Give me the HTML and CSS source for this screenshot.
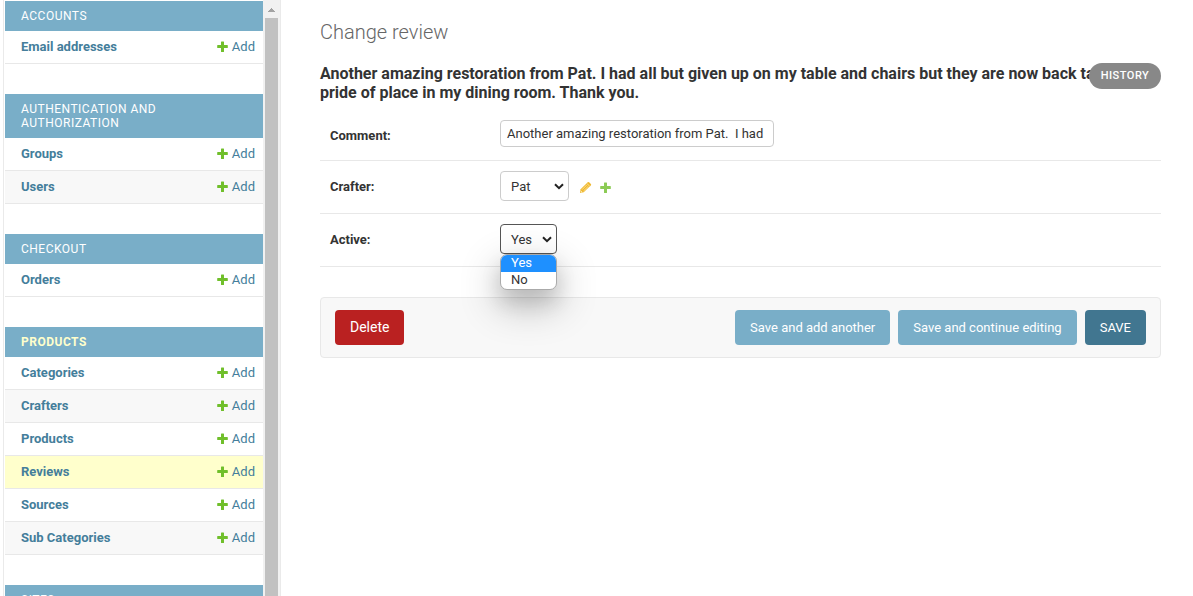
FILE: index.html
```html
<!DOCTYPE html>
<html lang="en">
<head>
<meta charset="utf-8">
<title>Change review</title>
<link rel="stylesheet" href="styles.css">
</head>
<body>
<svg class="defs" width="0" height="0" aria-hidden="true">
  <symbol id="plus" viewBox="0 0 11 11"><path d="M4.500 .5h2a.5.5 0 0 1 .5.500V4h3.300a.5.5 0 0 1 .5.500v2a.5.5 0 0 1-.5.500H7v3.500a.5.5 0 0 1-.5.500h-2a.5.5 0 0 1-.5-.5V7H.700a.5.5 0 0 1-.5-.5v-2A.5.5 0 0 1 .700 4H4V1a.5.5 0 0 1 .5-.5z"/></symbol>
</svg>
<div class="page">
  <nav class="sidebar">
    <div class="apps">
      <section class="app">
        <h3 class="caption">Accounts</h3>
        <div class="model"><a class="name">Email addresses</a><a class="add"><svg class="plus"><use href="#plus"/></svg>Add</a></div>
      </section>
      <section class="app">
        <h3 class="caption">Authentication and Authorization</h3>
        <div class="model"><a class="name">Groups</a><a class="add"><svg class="plus"><use href="#plus"/></svg>Add</a></div>
        <div class="model alt"><a class="name">Users</a><a class="add"><svg class="plus"><use href="#plus"/></svg>Add</a></div>
      </section>
      <section class="app">
        <h3 class="caption">Checkout</h3>
        <div class="model"><a class="name">Orders</a><a class="add"><svg class="plus"><use href="#plus"/></svg>Add</a></div>
      </section>
      <section class="app">
        <h3 class="caption current-app">Products</h3>
        <div class="model"><a class="name">Categories</a><a class="add"><svg class="plus"><use href="#plus"/></svg>Add</a></div>
        <div class="model alt"><a class="name">Crafters</a><a class="add"><svg class="plus"><use href="#plus"/></svg>Add</a></div>
        <div class="model"><a class="name">Products</a><a class="add"><svg class="plus"><use href="#plus"/></svg>Add</a></div>
        <div class="model current-model"><a class="name">Reviews</a><a class="add"><svg class="plus"><use href="#plus"/></svg>Add</a></div>
        <div class="model"><a class="name">Sources</a><a class="add"><svg class="plus"><use href="#plus"/></svg>Add</a></div>
        <div class="model alt"><a class="name">Sub Categories</a><a class="add"><svg class="plus"><use href="#plus"/></svg>Add</a></div>
      </section>
      <section class="app">
        <h3 class="caption">Sites</h3>
      </section>
    </div>
    <div class="scrollbar">
      <svg class="scroll-up" viewBox="0 0 7 4" shape-rendering="crispEdges"><path d="M3 0h1v1h1v1h1v1h1v1H0V3h1V2h1V1h1z"/></svg>
      <div class="thumb"></div>
    </div>
  </nav>
  <main class="content">
    <h1 class="title">Change review</h1>
    <div class="object">
      <h2 class="subtitle">Another amazing restoration from Pat. I had all but given up on my table and chairs but they are now back taking pride of place in my dining room. Thank you.</h2>
      <a class="history">History</a>
    </div>
    <form class="form">
      <div class="field comment-field">
        <label class="label">Comment:</label>
        <div class="text-input">Another amazing restoration from Pat.&nbsp; I had</div>
      </div>
      <div class="field">
        <label class="label">Crafter:</label>
        <div class="select crafter"><span>Pat</span><svg class="chevron" viewBox="0 0 10 7"><path d="M1 1.200l4 4 4-4"/></svg></div>
        <svg class="pencil" viewBox="0 0 13 13"><path fill="#efb830" d="M1 12l.6-3.800L8.700 1.200q.7-.6 1.400 0l1.800 1.700q.6.700 0 1.400L4.700 11.300z"/><path fill="none" stroke="#fbe29a" stroke-width=".9" d="M3 8.700L8 3.700M4.500 10L9.400 5.200M7.800 2.300l3 3"/><path fill="#fff3c9" d="M1.800 9.500l1.700 1.700-1.400.3z"/></svg>
        <svg class="plus add-related"><use href="#plus"/></svg>
      </div>
      <div class="field">
        <label class="label">Active:</label>
        <div class="select active"><span>Yes</span><svg class="chevron" viewBox="0 0 10 7"><path d="M1 1.200l4 4 4-4"/></svg>
          <div class="menu"><div class="option selected">Yes</div><div class="option">No</div></div>
        </div>
      </div>
      <div class="submit-row">
        <a class="button delete">Delete</a>
        <a class="button">Save and add another</a>
        <a class="button">Save and continue editing</a>
        <a class="button save">SAVE</a>
      </div>
    </form>
  </main>
</div>
</body>
</html>
```
FILE: styles.css
```css
* { box-sizing: border-box; }
body {
  margin: 0;
  height: 596px;
  overflow: hidden;
  background: #fff;
  color: #333;
  font: 13px/17px Roboto, "Liberation Sans", sans-serif;
}
.defs { position: absolute; }
.page { display: flex; height: 596px; }

.sidebar {
  display: flex;
  flex: none;
  width: 278px;
  height: 596px;
  margin-left: 3px;
  padding-left: 1px;
  overflow: hidden;
  border-left: 1px solid #eaeaea;
  border-right: 1px solid #eaeaea;
}
.apps { width: 258px; padding-top: 1px; }
.app { margin-bottom: 30px; }
.caption {
  margin: 0;
  padding: 8px 60px 8px 16px;
  background: #79aec8;
  color: #fff;
  font-size: 12px;
  font-weight: 400;
  line-height: 14px;
  letter-spacing: .5px;
  text-transform: uppercase;
}
.current-app { color: #ffc; font-weight: 700; }
.model {
  display: flex;
  align-items: center;
  justify-content: space-between;
  height: 33px;
  padding: 0 8px 2px 16px;
  border-bottom: 1px solid #e8e8e8;
  color: #447e9b;
}
.alt { background: #f8f8f8; }
.current-model { background: #ffc; }
.name { font-weight: 700; }
.add { display: flex; align-items: center; gap: 4px; }
.plus { width: 11px; height: 11px; fill: #70bf2b; }
.scrollbar { width: 17px; padding-top: 8px; background: #f1f1f1; }
.scroll-up { display: block; width: 7px; height: 4px; margin: 0 0 6px 5px; fill: #a3a3a3; }
.thumb { width: 13px; height: 600px; margin-left: 2px; background: #c1c1c1; }

.content { width: 841px; margin-left: 39px; padding-top: 20px; }
.title { margin: 0; color: #666; font-size: 20px; font-weight: 300; line-height: 24px; }
.object { position: relative; margin-top: 20px; }
.subtitle { margin: 0; font-size: 16px; font-weight: 700; line-height: 19px; }
.history {
  position: absolute;
  top: -1px;
  right: 0;
  width: 72px;
  height: 26px;
  border-radius: 13px;
  background: #888;
  color: #fff;
  font-size: 11px;
  font-weight: 500;
  line-height: 25px;
  letter-spacing: .5px;
  text-align: center;
  text-transform: uppercase;
}

.form { padding-top: 9px; }
.field {
  display: flex;
  align-items: center;
  height: 53px;
  padding: 0 10px 2px;
  border-bottom: 1px solid #e8e8e8;
}
.comment-field { height: 50px; padding-bottom: 5px; }
.label { width: 170px; font-weight: 700; }
.comment-field .label { padding-top: 4px; }
.text-input {
  width: 274px;
  height: 27px;
  padding: 4px 6px;
  border: 1px solid #ccc;
  border-radius: 4px;
  white-space: nowrap;
}
.select {
  position: relative;
  display: flex;
  align-items: center;
  justify-content: space-between;
  height: 30px;
  padding: 0 4px 0 10px;
  border: 1px solid #ccc;
  border-radius: 4px;
}
.crafter { width: 69px; }
.active { width: 57px; border-color: #555; }
.chevron { width: 10px; height: 7px; fill: none; stroke: #222; stroke-width: 2; }
.pencil { width: 13px; height: 13px; margin: 2px 0 0 10px; }
.add-related { margin: 2px 0 0 8px; opacity: .8; }
.menu {
  position: absolute;
  top: 29px;
  left: -1px;
  width: 57px;
  height: 36px;
  overflow: hidden;
  border: 1px solid #aaa;
  border-radius: 7px;
  background: #fff;
  box-shadow: 0 14px 40px rgba(0, 0, 0, .3), 0 12px 20px rgba(0, 0, 0, .12);
}
.option { height: 17px; padding-left: 10px; line-height: 16px; }
.selected { background: #1e90ff; color: #fff; }

.submit-row {
  display: flex;
  gap: 8px;
  margin-top: 30px;
  padding: 12px 14px;
  border: 1px solid #e8e8e8;
  border-radius: 4px;
  background: #f8f8f8;
}
.button {
  height: 35px;
  padding: 0 15px;
  border-radius: 4px;
  background: #79aec8;
  color: #fff;
  font-weight: 400;
  line-height: 35px;
  white-space: nowrap;
}
.delete { margin-right: auto; background: #ba2121; font-size: 14px; }
.save { background: #417690; }
```
